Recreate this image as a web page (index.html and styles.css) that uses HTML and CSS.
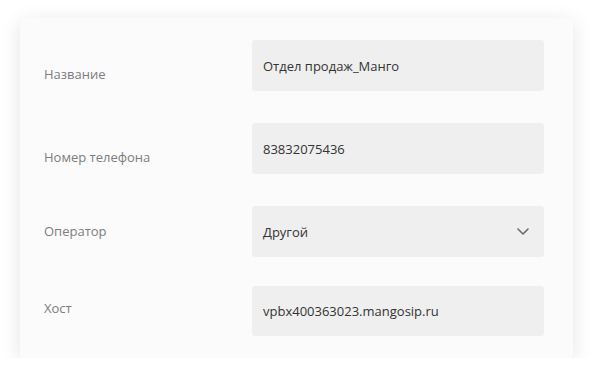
FILE: index.html
```html
<!DOCTYPE html>
<html lang="ru">
<head>
<meta charset="utf-8">
<link rel="stylesheet" href="styles.css">
</head>
<body>
<div class="card">
  <div class="row row-low">
    <div class="label">Название</div>
    <div class="field">Отдел продаж_Манго</div>
  </div>
  <div class="row row-low">
    <div class="label">Номер телефона</div>
    <div class="field">83832075436</div>
  </div>
  <div class="row row-mid">
    <div class="label">Оператор</div>
    <div class="field select">
      <span>Другой</span>
      <svg class="chev" width="12" height="7" viewBox="0 0 12 7"><path d="M1 1l5 5 5-5" fill="none" stroke="#6b6b6b" stroke-width="1.6" stroke-linecap="round" stroke-linejoin="round"/></svg>
    </div>
  </div>
  <div class="row row-high">
    <div class="label">Хост</div>
    <div class="field">vpbx400363023.mangosip.ru</div>
  </div>
</div>
</body>
</html>
```
FILE: styles.css
```css
html, body {
  margin: 0;
  padding: 0;
  background: #ffffff;
}
body {
  font-family: "Open Sans", "Noto Sans", sans-serif;
  font-size: 13px;
}
.card {
  margin: 18px 0 0 20px;
  width: 553px;
  box-sizing: border-box;
  padding: 22px 29px 22px 24px;
  background: #fbfbfb;
  border-radius: 3px;
  box-shadow: 0 4px 20px rgba(0, 0, 0, 0.11);
  display: flex;
  flex-direction: column;
  gap: 32px;
}
.row {
  display: flex;
  align-items: center;
  height: 51px;
}
.row-high {
  margin-top: -3px;
  height: 50px;
}
.label {
  width: 208px;
  flex: none;
  color: #7d7d7d;
}
.row-low .label { margin-top: 16px; }
.row-mid .label { margin-top: -2px; }
.row-high .label { margin-top: -6px; }
.field {
  flex: 1;
  height: 100%;
  box-sizing: border-box;
  background: #efefef;
  border-radius: 3px;
  padding: 0 11px;
  display: flex;
  align-items: center;
  color: #333333;
}
.select {
  justify-content: space-between;
  padding-right: 15px;
}
.chev {
  display: block;
}
```
